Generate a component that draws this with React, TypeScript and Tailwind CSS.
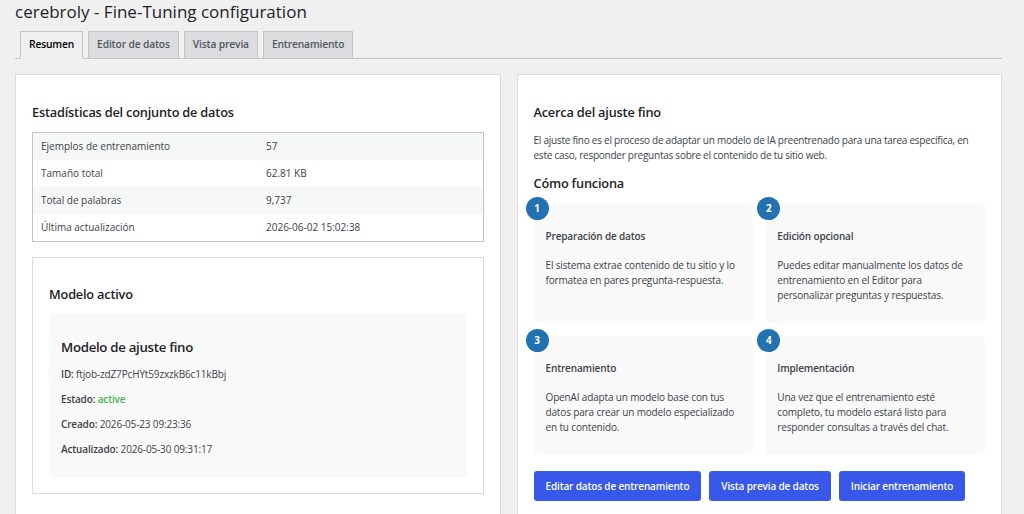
import { ReactNode } from "react";

const tabs = ["Resumen", "Editor de datos", "Vista previa", "Entrenamiento"];

const stats = [
  { label: "Ejemplos de entrenamiento", value: "57" },
  { label: "Tamaño total", value: "62.81 KB" },
  { label: "Total de palabras", value: "9,737" },
  { label: "Última actualización", value: "2026-06-02 15:02:38" },
];

const steps = [
  {
    n: "1",
    title: "Preparación de datos",
    text: "El sistema extrae contenido de tu sitio y lo formatea en pares pregunta-respuesta.",
  },
  {
    n: "2",
    title: "Edición opcional",
    text: "Puedes editar manualmente los datos de entrenamiento en el Editor para personalizar preguntas y respuestas.",
  },
  {
    n: "3",
    title: "Entrenamiento",
    text: "OpenAI adapta un modelo base con tus datos para crear un modelo especializado en tu contenido.",
  },
  {
    n: "4",
    title: "Implementación",
    text: "Una vez que el entrenamiento esté completo, tu modelo estará listo para responder consultas a través del chat.",
  },
];

const buttons = ["Editar datos de entrenamiento", "Vista previa de datos", "Iniciar entrenamiento"];

const Card = ({ children }: { children: ReactNode }) => (
  <div className="border border-[#dcdcde] bg-white px-4 pt-[27px] pb-4">{children}</div>
);

const Heading = ({ children }: { children: ReactNode }) => (
  <h2 className="text-[12.75px] leading-[20px] font-semibold tracking-[-0.2px] text-[#1d2327]">{children}</h2>
);

export default function App() {
  return (
    <div className="min-h-screen bg-[#f0f0f1] font-['Open_Sans',sans-serif] text-[10px] tracking-[-0.15px] text-[#3c434a] pl-[15px] pr-[22px]">
      <h1 className="text-[17px] leading-[24px] tracking-normal text-[#1d2327]">cerebroly - Fine-Tuning configuration</h1>

      {/* Tabs */}
      <div className="mt-[7px] flex gap-[5px] border-b border-[#c3c4c7] pl-[5px]">
        {tabs.map((t, i) => (
          <div
            key={t}
            className={
              i === 0
                ? "-mb-px h-[28px] border border-[#c3c4c7] border-b-[#f0f0f1] bg-[#f0f0f1] px-[8px] text-[10.25px] leading-[25px] font-semibold text-black"
                : "h-[27px] border border-[#c3c4c7] border-b-0 bg-[#dcdcde] px-[8px] text-[10.25px] leading-[25px] font-semibold text-[#50575e]"
            }
          >
            {t}
          </div>
        ))}
      </div>

      <div className="mt-[15px] grid grid-cols-2 gap-4">
        {/* Left column */}
        <Card>
          <Heading>Estadísticas del conjunto de datos</Heading>
          <div className="mt-[10px] border border-[#c3c4c7]">
            {stats.map((s, i) => (
              <div
                key={s.label}
                className={`flex h-[27px] items-center tracking-normal ${i % 2 === 0 ? "bg-[#f6f7f7]" : "bg-white"}`}
              >
                <span className="w-[233px] pl-2">{s.label}</span>
                <span>{s.value}</span>
              </div>
            ))}
          </div>

          <div className="mt-[15px] border border-[#dcdcde] px-4 pt-[26px] pb-4">
            <Heading>Modelo activo</Heading>
            <div className="mt-[9px] rounded bg-[#f9f9f9] px-3 pt-[24px] pb-[20px]">
              <h3 className="text-[13.25px] leading-[20px] font-semibold tracking-[-0.3px] text-[#1d2327]">
                Modelo de ajuste fino
              </h3>
              <div className="mt-[10px] flex flex-col gap-[10px] leading-[15px]">
                <p>
                  <strong className="font-semibold">ID:</strong> ftjob-zdZ7PcHYt59zxzkB6c11kBbj
                </p>
                <p>
                  <strong className="font-semibold">Estado:</strong>{" "}
                  <span className="font-semibold text-[#46b450]">active</span>
                </p>
                <p>
                  <strong className="font-semibold">Creado:</strong> 2026-05-23 09:23:36
                </p>
                <p>
                  <strong className="font-semibold">Actualizado:</strong> 2026-05-30 09:31:17
                </p>
              </div>
            </div>
          </div>
        </Card>

        {/* Right column */}
        <Card>
          <Heading>Acerca del ajuste fino</Heading>
          <p className="mt-[11px] leading-[15px] tracking-[-0.25px]">
            El ajuste fino es el proceso de adaptar un modelo de IA preentrenado para una tarea específica, en este caso,
            responder preguntas sobre el contenido de tu sitio web.
          </p>
          <h3 className="mt-[10px] text-[12.75px] leading-[20px] font-semibold tracking-[-0.2px] text-[#1d2327]">
            Cómo funciona
          </h3>
          <div className="mt-[11px] grid grid-cols-2 gap-x-3 gap-y-[13px]">
            {steps.map((s) => (
              <div key={s.n} className="relative rounded bg-[#f9f9f9] px-3 pt-[25px] pb-5">
                <span className="absolute -top-[7px] -left-[8px] flex h-[23px] w-[23px] items-center justify-center rounded-full bg-[#2271b1] text-[10px] font-bold text-white">
                  {s.n}
                </span>
                <h4 className="leading-[15px] font-semibold">{s.title}</h4>
                <p className="mt-[14px] leading-[15px]">{s.text}</p>
              </div>
            ))}
          </div>
          <div className="mt-[16px] flex gap-2">
            {buttons.map((b) => (
              <button
                key={b}
                className="h-[30px] whitespace-nowrap rounded-[3px] bg-[#3858e9] px-[12px] font-semibold text-white"
              >
                {b}
              </button>
            ))}
          </div>
        </Card>
      </div>
    </div>
  );
}
